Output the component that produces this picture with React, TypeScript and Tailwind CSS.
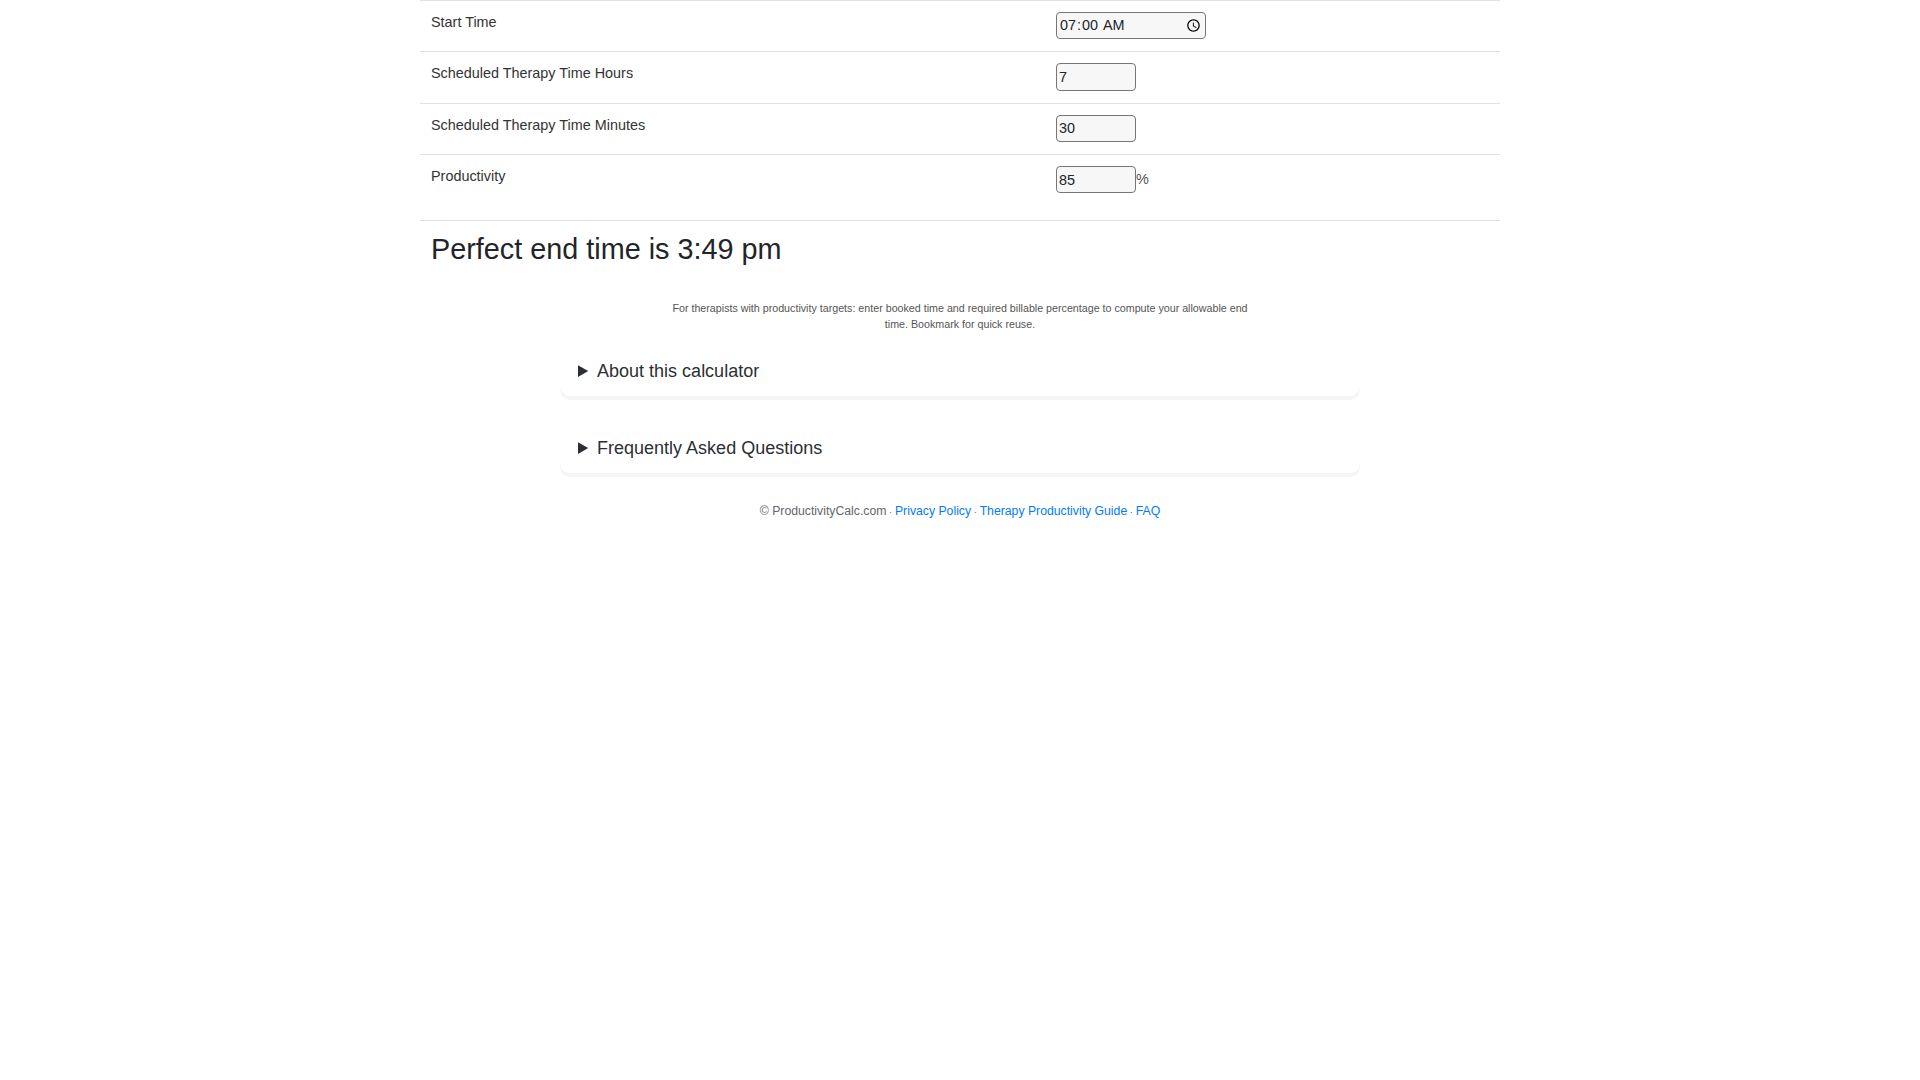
const inputCls =
  "box-border h-[27.5px] border border-[#767676] rounded-[4px] bg-[#f7f7f7] text-[14.4px] text-[#212529] pl-[2px] pr-[1px] outline-none";

const rows = [
  { label: "Start Time", h: "h-[51.4px]" },
  { label: "Scheduled Therapy Time Hours", h: "h-[51.4px]" },
  { label: "Scheduled Therapy Time Minutes", h: "h-[51.4px]" },
  { label: "Productivity", h: "h-[65.8px]" },
];

function Field({ index }: { index: number }) {
  if (index === 0) {
    return <input type="time" defaultValue="07:00" className={inputCls + " w-[150px]"} />;
  }
  const v = ["7", "30", "85"][index - 1];
  return (
    <span className="flex items-center">
      <input type="number" defaultValue={v} className={inputCls + " w-[80px]"} />
      {index === 3 && <span className="text-[14.4px] text-[#555]">%</span>}
    </span>
  );
}

function Details({ title }: { title: string }) {
  return (
    <details className="w-[800px] mx-auto h-[50px] rounded-[10px] shadow-[0_4px_0_#f5f5f5] px-[18px] pt-[12px]">
      <summary className="text-[18px] leading-[27px] text-[#2b2f33] cursor-pointer">{title}</summary>
    </details>
  );
}

export default function App() {
  return (
    <div className="min-h-screen bg-white font-['Liberation_Sans',Arial,sans-serif] text-[#212529]">
      <div className="w-[1080px] mx-auto">
        {rows.map((r, i) => (
          <div key={r.label} className={"box-border flex border-t border-[#dee2e6] " + r.h}>
            <div className="w-[624px] pl-[11px] pt-[10.8px] text-[14.4px] leading-[21.6px] text-[#333]">{r.label}</div>
            <div className="pl-[12px] pt-[10.8px]"><Field index={i} /></div>
          </div>
        ))}
        <div className="border-t border-[#dee2e6] pl-[11px] pt-[10px]">
          <h3 className="text-[28.8px] leading-[36px] font-normal">Perfect end time is 3:49 pm</h3>
        </div>
        <p className="w-[600px] mx-auto mt-[33px] text-center text-[10.7px] leading-[16px] text-[#555]">
          For therapists with productivity targets: enter booked time and required billable percentage to compute your allowable end time. Bookmark for quick reuse.
        </p>
        <div className="mt-[14px] flex flex-col gap-[27px]">
          <Details title="About this calculator" />
          <Details title="Frequently Asked Questions" />
        </div>
        <p className="mt-[29px] text-center text-[12.24px] leading-[18px] text-[#666]">
          © ProductivityCalc.com<span className="text-[9.6px]"> · </span><a className="text-[#007bff]" href="#">Privacy Policy</a><span className="text-[9.6px]"> · </span><a className="text-[#007bff]" href="#">Therapy Productivity Guide</a><span className="text-[9.6px]"> · </span><a className="text-[#007bff]" href="#">FAQ</a>
        </p>
      </div>
    </div>
  );
}
